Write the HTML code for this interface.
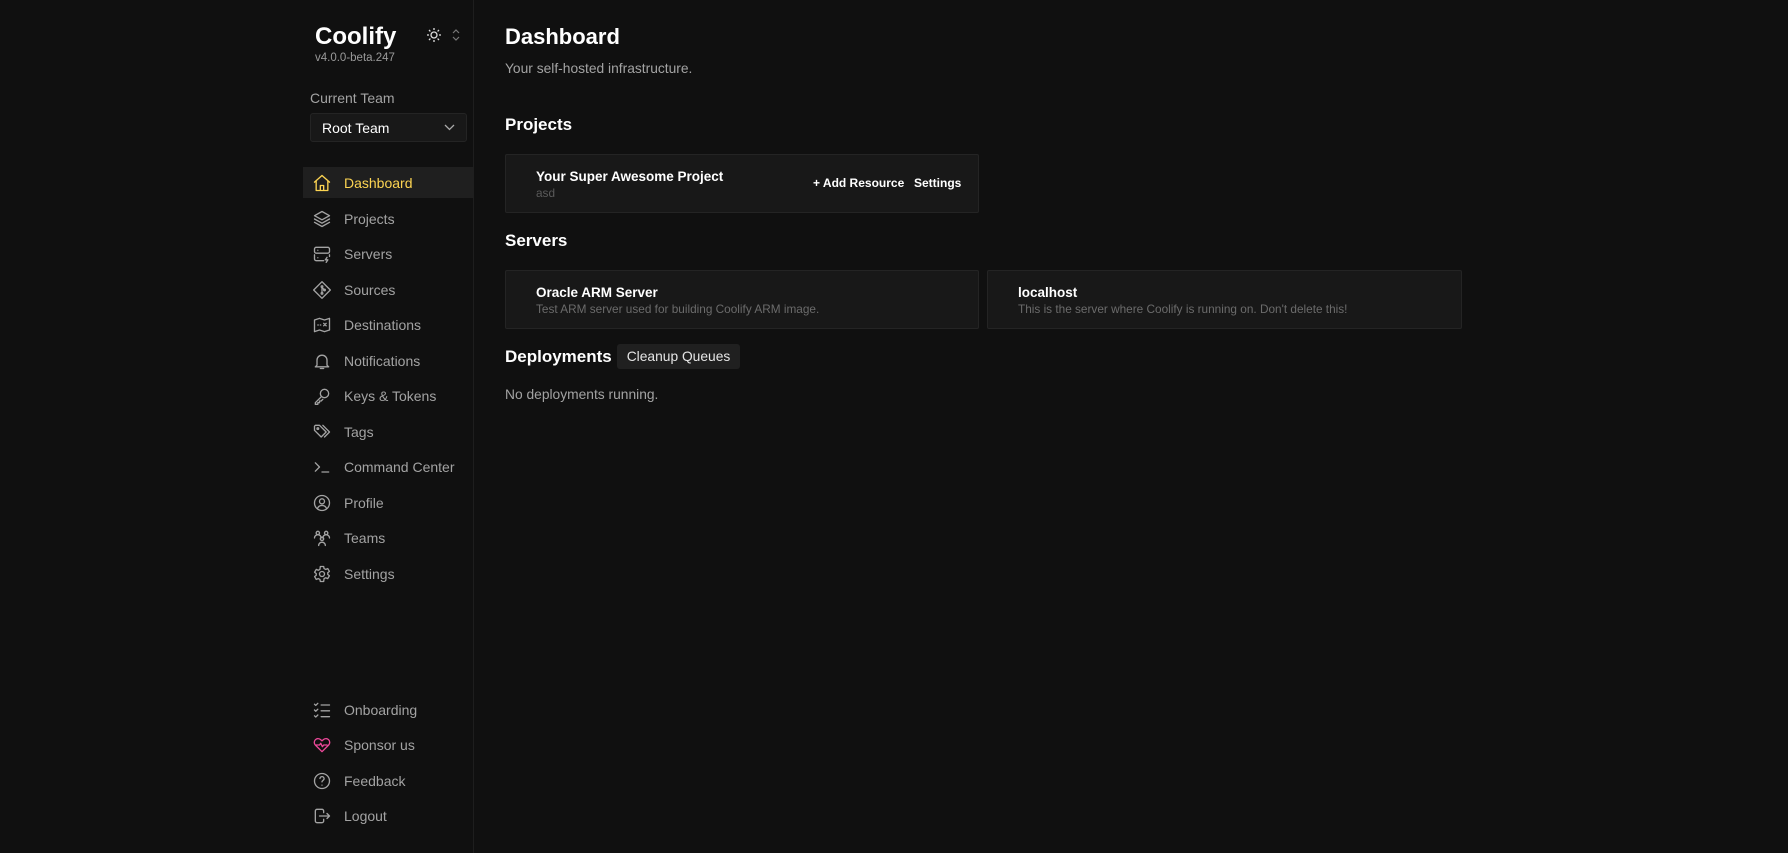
<!DOCTYPE html>
<html><head><meta charset="utf-8"><style>
*{margin:0;padding:0;box-sizing:border-box}
body{width:1788px;height:853px;background:#101010;font-family:"Liberation Sans",sans-serif;color:#fff;position:relative;overflow:hidden}
.side{position:absolute;left:0;top:0;width:474px;height:853px;border-right:1px solid #1e1e1e}
.abs{position:absolute}
.nav{position:absolute;left:303px;width:171px;height:31px;display:flex;align-items:center;color:#a3a3a3;font-size:14px}
.nav svg{position:absolute;left:9px;width:20px;height:20px;fill:none;stroke:#a3a3a3;stroke-width:1.6;stroke-linecap:round;stroke-linejoin:round}
.nav span{position:absolute;left:41px}
.nav.act{background:#1f1f1f;color:#fcd452}
.nav.act svg{stroke:#fcd452}
.card{position:absolute;background:#181818;border:1px solid #242424;border-radius:2px}
.t{position:absolute;font-size:13.5px;font-weight:bold;color:#fff}
.s{position:absolute;font-size:11.8px;color:#6b6b6b}
h2{position:absolute;font-size:17px;font-weight:bold;left:505px}
</style></head><body>
<div class="side">
<div class="abs" style="left:315px;top:23px;font-size:24px;font-weight:bold">Coolify</div>
<div class="abs" style="left:315px;top:52px;font-size:11.5px;color:#9a9a9a">v4.0.0-beta.247</div>
<svg class="abs" style="left:426px;top:27px" width="16" height="16" viewBox="0 0 16 16" fill="none" stroke="#ddd" stroke-width="1.3"><circle cx="8" cy="8" r="3"/><path d="M8 1v2M8 13v2M1 8h2M13 8h2M3 3l1.4 1.4M11.6 11.6L13 13M3 13l1.4-1.4M11.6 4.4L13 3"/></svg>
<svg class="abs" style="left:452px;top:29px" width="8" height="12" viewBox="0 0 8 12" fill="none" stroke="#777" stroke-width="1.2"><path d="M1 4l3-3 3 3M1 8l3 3 3-3"/></svg>
<div class="abs" style="left:310px;top:90px;font-size:14px;color:#a3a3a3">Current Team</div>
<div class="abs" style="left:310px;top:113px;width:157px;height:29px;background:#181818;border:1px solid #242424;border-radius:3px;font-size:14px;padding:6px 11px">Root Team
<svg class="abs" style="right:11px;top:10px" width="11" height="7" viewBox="0 0 11 7" fill="none" stroke="#aaa" stroke-width="1.3"><path d="M1 1l4.5 4.5L10 1"/></svg></div>

<div class="nav act" style="top:167px"><svg viewBox="0 0 24 24"><path d="M3 11l9-8 9 8M5 9.5V21h14V9.5M10 21v-6h4v6"/></svg><span>Dashboard</span></div>
<div class="nav" style="top:203px"><svg viewBox="0 0 24 24"><path d="M12 3l9 5-9 5-9-5z"/><path d="M3 12l9 5 9-5M3 16l9 5 9-5"/></svg><span>Projects</span></div>
<div class="nav" style="top:238px"><svg viewBox="0 0 24 24"><rect x="3" y="4" width="18" height="7" rx="2"/><path d="M3 13v5a2 2 0 002 2h9M21 13v2M7 7.5h0M7 16.5h0M18 16l-2 3h3l-2 3"/></svg><span>Servers</span></div>
<div class="nav" style="top:274px"><svg viewBox="0 0 24 24"><path d="M12 2l10 10-10 10L2 12z"/><circle cx="12" cy="8" r="1"/><circle cx="12" cy="16" r="1"/><circle cx="15" cy="12" r="1"/><path d="M12 9v6M12 9l3 3"/></svg><span>Sources</span></div>
<div class="nav" style="top:309px"><svg viewBox="0 0 24 24"><path d="M3 6l6-2 6 2 6-2v14l-6 2-6-2-6 2z"/><path d="M14 10l3 3M17 10l-3 3M7 12h.5M10 12h.5"/></svg><span>Destinations</span></div>
<div class="nav" style="top:345px"><svg viewBox="0 0 24 24"><path d="M6 17V11a6 6 0 0112 0v6l2 2H4zM10 21h4"/></svg><span>Notifications</span></div>
<div class="nav" style="top:380px"><svg viewBox="0 0 24 24"><circle cx="15" cy="9" r="5"/><path d="M11.5 12.5L4 20v2h3v-2h2v-2h2l2-2"/></svg><span>Keys &amp; Tokens</span></div>
<div class="nav" style="top:416px"><svg viewBox="0 0 24 24"><path d="M3 5v5l8 8 6-6-8-8H4zM13 4l8 8-6 6"/><circle cx="7" cy="8" r="1"/></svg><span>Tags</span></div>
<div class="nav" style="top:451px"><svg viewBox="0 0 24 24"><path d="M4 7l5 5-5 5M12 18h8"/></svg><span>Command Center</span></div>
<div class="nav" style="top:487px"><svg viewBox="0 0 24 24"><circle cx="12" cy="12" r="9"/><circle cx="12" cy="10" r="3"/><path d="M6.5 18.5a6 6 0 0111 0"/></svg><span>Profile</span></div>
<div class="nav" style="top:522px"><svg viewBox="0 0 24 24"><circle cx="7" cy="6" r="2"/><circle cx="17" cy="6" r="2"/><circle cx="12" cy="13" r="2"/><path d="M3 12a4 4 0 018 0M13 12a4 4 0 018 0M8 21a4 4 0 018 0"/></svg><span>Teams</span></div>
<div class="nav" style="top:558px"><svg viewBox="0 0 24 24"><circle cx="12" cy="12" r="3"/><path d="M10 3h4l.5 2.5 2 1 2.4-1 2 3.4-2 1.6v2l2 1.6-2 3.4-2.4-1-2 1L14 21h-4l-.5-2.5-2-1-2.4 1-2-3.4 2-1.6v-2l-2-1.6 2-3.4 2.4 1 2-1z"/></svg><span>Settings</span></div>

<div class="nav" style="top:694px"><svg viewBox="0 0 24 24"><path d="M3 5l1.5 1.5L7 4M3 12l1.5 1.5L7 11M3 19l1.5 1.5L7 18M11 6h10M11 13h10M11 20h10"/></svg><span>Onboarding</span></div>
<div class="nav" style="top:729px"><svg viewBox="0 0 24 24" style="stroke:#ec4899"><path d="M12 20l-8-8a4.5 4.5 0 016.5-6.3L12 7l1.5-1.3A4.5 4.5 0 0120 12z"/><path d="M5 12h4l1.5-2 2 4 1.5-2h4"/></svg><span>Sponsor us</span></div>
<div class="nav" style="top:765px"><svg viewBox="0 0 24 24"><circle cx="12" cy="12" r="9"/><path d="M9.5 9a2.5 2.5 0 015 .5c0 1.5-2.5 2-2.5 3.5M12 17h0"/></svg><span>Feedback</span></div>
<div class="nav" style="top:800px"><svg viewBox="0 0 24 24"><path d="M14 8V6a2 2 0 00-2-2H6a2 2 0 00-2 2v12a2 2 0 002 2h6a2 2 0 002-2v-2M9 12h12l-3-3M18 15l3-3"/></svg><span>Logout</span></div>
</div>

<div class="abs" style="left:505px;top:24px;font-size:22px;font-weight:bold">Dashboard</div>
<div class="abs" style="left:505px;top:61px;font-size:13.8px;color:#a3a3a3">Your self-hosted infrastructure.</div>
<h2 style="top:115px">Projects</h2>
<div class="card" style="left:505px;top:154px;width:474px;height:59px">
<div class="t" style="left:30px;top:14px">Your Super Awesome Project</div>
<div class="s" style="left:30px;top:31px;color:#5a5a5a">asd</div>
<div class="t" style="left:307px;top:21px;font-size:12px">+ Add Resource</div>
<div class="t" style="left:408px;top:21px;font-size:12px">Settings</div>
</div>
<h2 style="top:231px">Servers</h2>
<div class="card" style="left:505px;top:270px;width:474px;height:59px">
<div class="t" style="left:30px;top:14px">Oracle ARM Server</div>
<div class="s" style="left:30px;top:31px">Test ARM server used for building Coolify ARM image.</div>
</div>
<div class="card" style="left:987px;top:270px;width:475px;height:59px">
<div class="t" style="left:30px;top:14px">localhost</div>
<div class="s" style="left:30px;top:31px">This is the server where Coolify is running on. Don't delete this!</div>
</div>
<h2 style="top:347px">Deployments</h2>
<div class="abs" style="left:617px;top:344px;width:123px;height:25px;background:#202020;border-radius:3px;font-size:13.8px;text-align:center;line-height:25px;color:#e5e5e5">Cleanup Queues</div>
<div class="abs" style="left:505px;top:387px;font-size:13.8px;color:#a3a3a3">No deployments running.</div>
</body></html>
